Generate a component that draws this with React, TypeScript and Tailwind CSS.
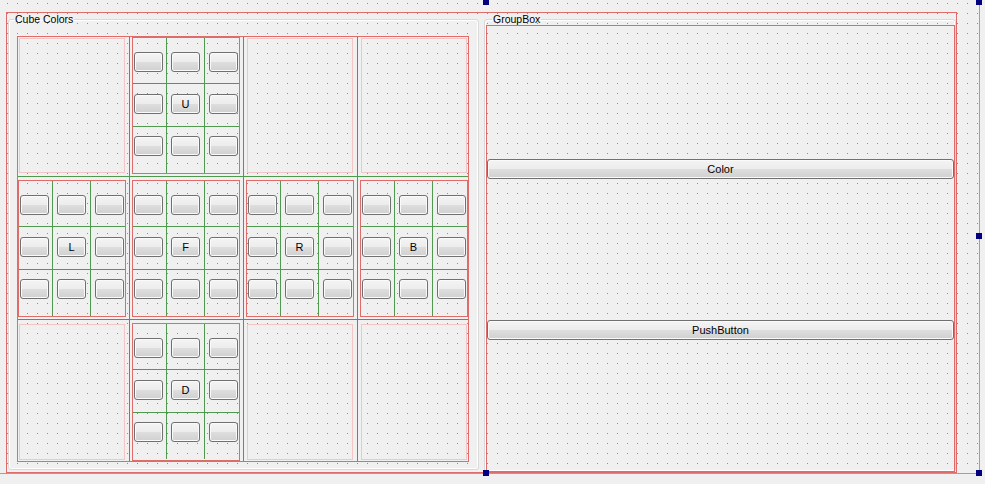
import React from 'react';

const BTN =
  'h-[20px] rounded-[3px] border border-[#707070] bg-[linear-gradient(to_bottom,#f4f4f4_0%,#ececec_50%,#dedede_50%,#d0d0d0_100%)] shadow-[inset_0_0_0_1px_#fafafa] flex items-center justify-center text-[11px] leading-none text-black';

const colPad = ['pl-[1px]', 'pl-[4px]', 'pl-[4px]'];
const rowPad = ['pt-[14px]', 'pt-[10px]', 'pt-[9px]'];

function Face({ label }: { label: string }) {
  const cells = Array.from({ length: 9 }, (_, i) => i);
  return (
    <div className="border border-[#e06b6b] grid grid-cols-[34px_38px_34px] grid-rows-[46px_43px_46px]">
      {cells.map((i) => {
        const r = Math.floor(i / 3);
        const c = i % 3;
        return (
          <div
            key={i}
            className={`${colPad[c]} ${rowPad[r]} ${c < 2 ? 'border-r border-r-[#4f9a4f]' : ''} ${r < 2 ? 'border-b border-b-[#4f9a4f]' : ''}`}
          >
            <div className={`${BTN} w-[29px]`}>{i === 4 ? label : ''}</div>
          </div>
        );
      })}
    </div>
  );
}

function Empty() {
  return <div className="m-[1px] border border-[#f3c6c6]" />;
}

const layout = [
  ['', 'U', '', ''],
  ['L', 'F', 'R', 'B'],
  ['', 'D', '', ''],
];

export default function App() {
  return (
    <div className="relative w-[985px] h-[484px] bg-[#f0f0f0] overflow-hidden font-['Liberation_Sans',Arial,sans-serif] text-black">
      {/* form */}
      <div className="w-[980px] h-[474px] border-r border-b border-[#a0a0a0] pt-[12px] pl-[6px] bg-[radial-gradient(circle_at_0.5px_0.5px,#8e8e8e_0.5px,transparent_0.9px)] bg-size-[10px_10px] bg-position-[7px_3px]">
        {/* top-level layout */}
        <div className="w-[951px] h-[461px] border border-[#e06b6b] flex gap-[5px] pl-[1px]">
          {/* Cube Colors */}
          <fieldset className="mt-[1px] w-[471px] h-[456px] border border-[#d9d9d9] rounded-[3px] shadow-[inset_0_0_0_1px_#ffffff]">
            <legend className="ml-[5px] px-[1px] text-[10.5px] leading-[11px]">Cube Colors</legend>
            <div className="relative ml-[8px] mt-[11px] w-[452px] h-[426px] border border-[#e06b6b] grid grid-cols-[108px_108px_108px_108px] grid-rows-[137px_137px_138px] gap-[6px]">
              {layout.flat().map((f, i) =>
                f ? <Face key={i} label={f} /> : <Empty key={i} />
              )}
              <div className="absolute top-0 bottom-0 left-[111px] w-px bg-[#4f9a4f]" />
              <div className="absolute top-0 bottom-0 left-[225px] w-px bg-[#4f9a4f]" />
              <div className="absolute top-0 bottom-0 left-[339px] w-px bg-[#4f9a4f]" />
              <div className="absolute left-0 right-0 top-[139px] h-px bg-[#4f9a4f]" />
              <div className="absolute left-0 right-0 top-[282px] h-px bg-[#4f9a4f]" />
            </div>
          </fieldset>

          {/* GroupBox */}
          <fieldset className="mt-[1px] w-[472px] h-[458px] border border-[#d9d9d9] rounded-[3px] shadow-[inset_0_0_0_1px_#ffffff]">
            <legend className="ml-[7px] px-[1px] text-[10.5px] leading-[11px]">GroupBox</legend>
            <div className="ml-[1px] w-[469px] h-[447px] border border-[#e06b6b] flex flex-col">
              <div className={`${BTN} mt-[133px] w-[467px]`}>Color</div>
              <div className={`${BTN} mt-[141px] w-[467px]`}>PushButton</div>
            </div>
          </fieldset>
        </div>
      </div>

      {/* selection handles */}
      <div className="absolute left-[483px] top-[-1px] w-[6px] h-[6px] bg-[#000080]" />
      <div className="absolute left-[976px] top-[-1px] w-[6px] h-[6px] bg-[#000080]" />
      <div className="absolute left-[976px] top-[233px] w-[6px] h-[6px] bg-[#000080]" />
      <div className="absolute left-[976px] top-[470px] w-[6px] h-[6px] bg-[#000080]" />
      <div className="absolute left-[483px] top-[470px] w-[6px] h-[6px] bg-[#000080]" />
    </div>
  );
}
